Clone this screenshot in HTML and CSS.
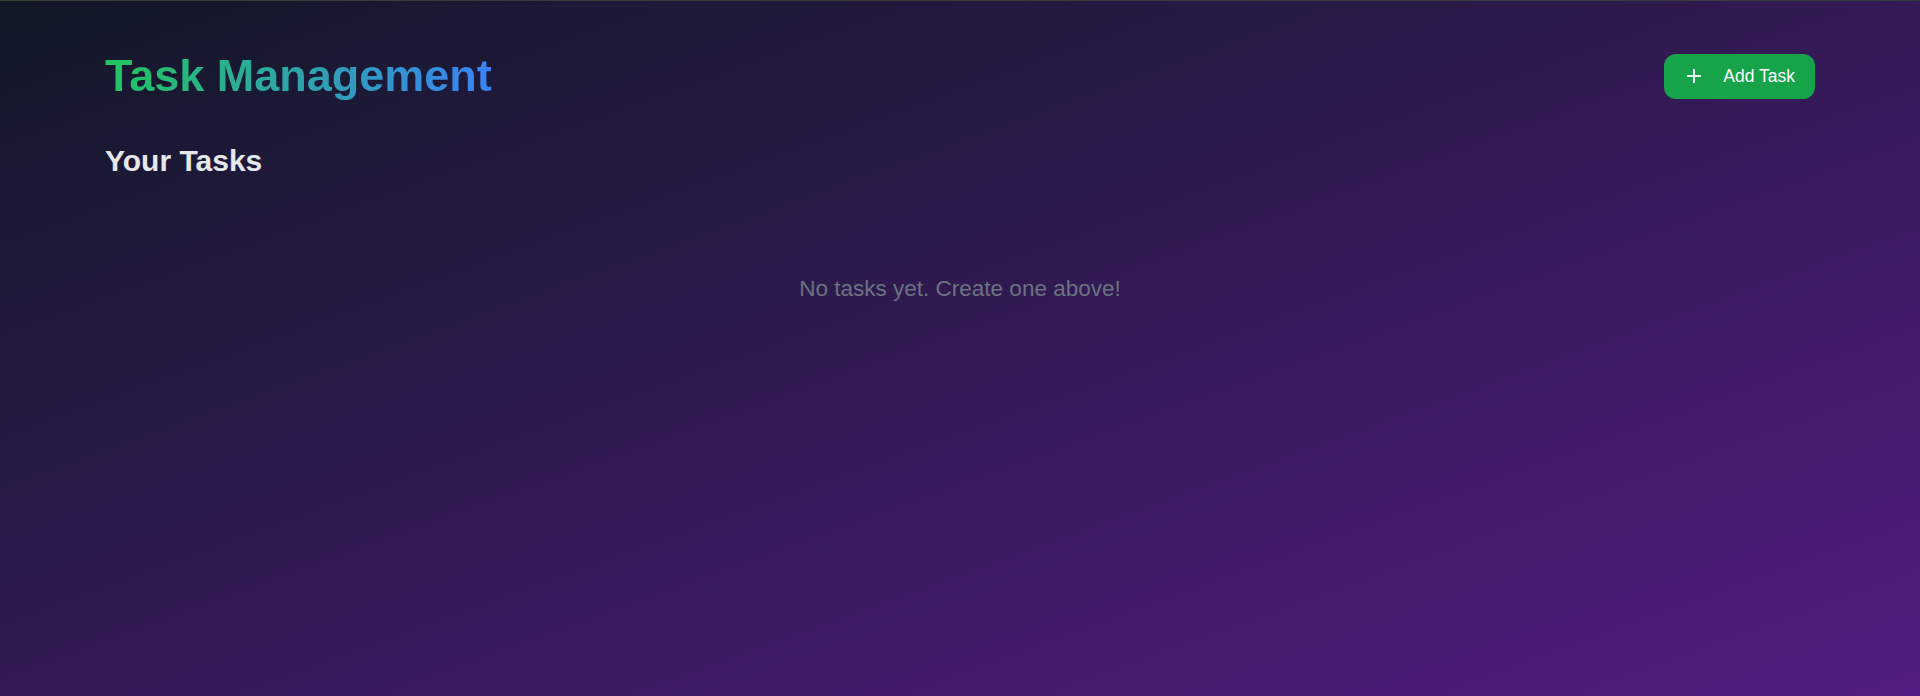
FILE: index.html
```html
<!DOCTYPE html>
<html lang="en">
<head>
<meta charset="utf-8">
<title>Task Management</title>
<link rel="stylesheet" href="styles.css">
</head>
<body>
<div class="page">
  <div class="container">
    <header class="header">
      <h1 class="title">Task Management</h1>
      <button class="add-btn" type="button">
        <svg class="add-icon" viewBox="0 0 24 24" width="24" height="24" fill="none" stroke="currentColor" stroke-width="2" stroke-linecap="butt"><path d="M5 12h14"/><path d="M12 5v14"/></svg>
        <span>Add Task</span>
      </button>
    </header>
    <section class="tasks">
      <h2 class="subtitle">Your Tasks</h2>
      <p class="empty">No tasks yet. Create one above!</p>
    </section>
  </div>
</div>
</body>
</html>
```

FILE: styles.css
```css
* { box-sizing: border-box; }
html, body { margin: 0; padding: 0; height: 100%; }
body {
  font-family: "Liberation Sans", Arial, sans-serif;
  background: #111827;
}
.page {
  min-height: 696px;
  border-top: 1px solid #3b3b3b;
  background: linear-gradient(to bottom right, #111827 0%, #531c82 100%);
}
.container {
  padding: 50px 105px 0 105px;
}
.header {
  display: flex;
  align-items: center;
  justify-content: space-between;
  height: 50px;
}
.title {
  margin: 0;
  font-size: 45px;
  line-height: 50px;
  font-weight: 700;
  background: linear-gradient(to right, #22c55e, #3b82f6);
  -webkit-background-clip: text;
  background-clip: text;
  color: transparent;
}
.add-btn {
  display: flex;
  align-items: center;
  gap: 17px;
  height: 45px;
  padding: 0 20px 0 18px;
  border: none;
  border-radius: 12px;
  background: #16a34a;
  color: #ffffff;
  font-family: "Liberation Sans", Arial, sans-serif;
  font-size: 17.5px;
  margin-top: 0;
}
.add-icon { display: block; color: #e8f5ec; }
.tasks { margin-top: 42px; }
.subtitle {
  margin: 0;
  font-size: 30px;
  line-height: 36px;
  font-weight: 700;
  color: #e5e7eb;
}
.empty {
  margin: 96px 0 0;
  text-align: center;
  font-size: 22.5px;
  line-height: 28px;
  color: #6b7280;
}
```
